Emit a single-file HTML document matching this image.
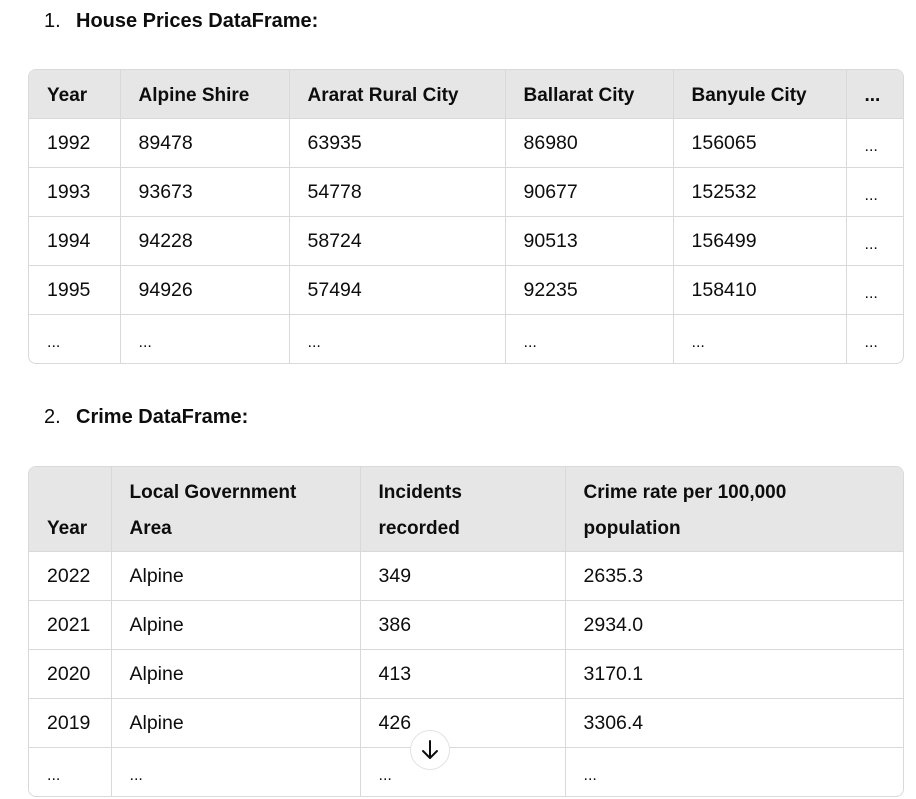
<!DOCTYPE html>
<html><head><meta charset="utf-8"><style>
body{margin:0;width:916px;height:799px;overflow:hidden;background:#fff;font-family:"Liberation Sans",sans-serif;color:#0d0d0d;position:relative}
.h{position:absolute;font-size:20px;}
.h b{position:absolute;left:32px;white-space:nowrap}
.w{position:absolute;left:28px;width:874px;border:1px solid #d9d9d9;border-radius:8px;overflow:hidden}
table{border-collapse:collapse;table-layout:fixed;width:100%;font-size:19.5px}
td,th{border-left:1px solid #d9d9d9;border-top:1px solid #d9d9d9;padding:2px 0 0 18px;text-align:left;height:49px;box-sizing:border-box}
th{background:#e6e6e6;font-weight:bold;font-size:19px;border-top:none;padding-top:5px;height:48px}
tr>*:first-child{border-left:none}
.dots{font-size:16px;padding-top:8px}
.c2 th{height:84px;vertical-align:bottom;padding-bottom:4px;line-height:36px}
.btn{position:absolute;left:410px;top:730px;width:38px;height:38px;border:1px solid #e3e3e3;border-radius:50%;background:#fff}
</style></head><body>
<div class="h" style="left:44px;top:10px">1.<b>House Prices DataFrame:</b></div>
<div class="w" style="top:69px">
<table>
<colgroup><col style="width:91px"><col style="width:169px"><col style="width:216px"><col style="width:168px"><col style="width:173px"><col></colgroup>
<tr><th>Year</th><th>Alpine Shire</th><th>Ararat Rural City</th><th>Ballarat City</th><th>Banyule City</th><th>...</th></tr>
<tr><td>1992</td><td>89478</td><td>63935</td><td>86980</td><td>156065</td><td class="dots">...</td></tr>
<tr><td>1993</td><td>93673</td><td>54778</td><td>90677</td><td>152532</td><td class="dots">...</td></tr>
<tr><td>1994</td><td>94228</td><td>58724</td><td>90513</td><td>156499</td><td class="dots">...</td></tr>
<tr><td>1995</td><td>94926</td><td>57494</td><td>92235</td><td>158410</td><td class="dots">...</td></tr>
<tr><td class="dots">...</td><td class="dots">...</td><td class="dots">...</td><td class="dots">...</td><td class="dots">...</td><td class="dots">...</td></tr>
</table></div>
<div class="h" style="left:44px;top:406px">2.<b>Crime DataFrame:</b></div>
<div class="w" style="top:466px">
<table class="c2">
<colgroup><col style="width:82px"><col style="width:249px"><col style="width:205px"><col></colgroup>
<tr><th>Year</th><th>Local Government<br>Area</th><th>Incidents<br>recorded</th><th>Crime rate per 100,000<br>population</th></tr>
<tr><td>2022</td><td>Alpine</td><td>349</td><td>2635.3</td></tr>
<tr><td>2021</td><td>Alpine</td><td>386</td><td>2934.0</td></tr>
<tr><td>2020</td><td>Alpine</td><td>413</td><td>3170.1</td></tr>
<tr><td>2019</td><td>Alpine</td><td>426</td><td>3306.4</td></tr>
<tr><td class="dots">...</td><td class="dots">...</td><td class="dots">...</td><td class="dots">...</td></tr>
</table></div>
<div class="btn"><svg width="38" height="38" viewBox="0 0 38 38"><path d="M19 10v17M12 20l7 7 7-7" fill="none" stroke="#0d0d0d" stroke-width="2" stroke-linecap="round" stroke-linejoin="round"/></svg></div>
</body></html>
